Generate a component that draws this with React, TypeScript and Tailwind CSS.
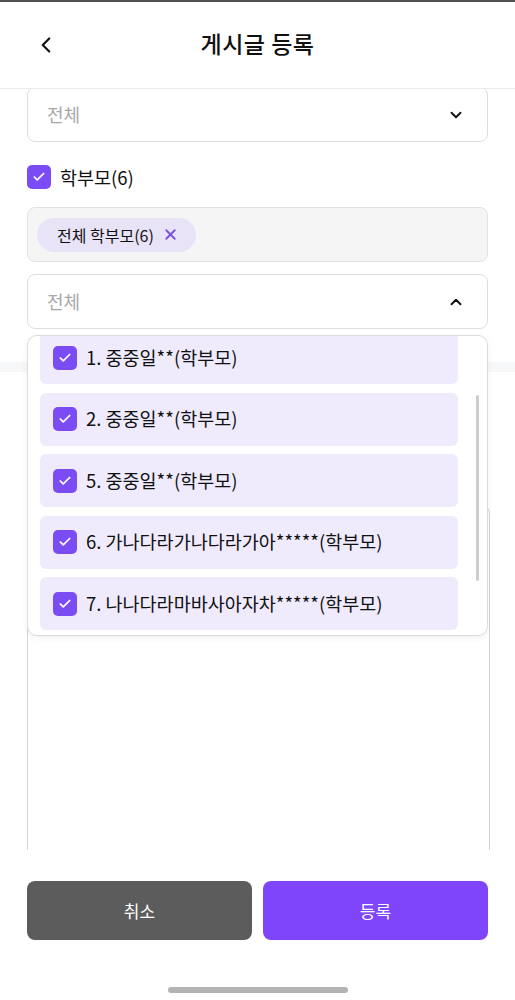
import { Check, ChevronDown, ChevronLeft, ChevronUp, X } from "lucide-react";

const members = [
  "1. 중중일**(학부모)",
  "2. 중중일**(학부모)",
  "5. 중중일**(학부모)",
  "6. 가나다라가나다라가아*****(학부모)",
  "7. 나나다라마바사아자차*****(학부모)",
];

function CheckBox() {
  return (
    <span className="flex h-[24px] w-[24px] shrink-0 items-center justify-center rounded-[5px] bg-[#7b4cf4]">
      <Check className="h-[14px] w-[14px] text-white" strokeWidth={3} />
    </span>
  );
}

export default function App() {
  return (
    <div className="flex h-[1000px] w-[515px] flex-col overflow-hidden bg-white font-['Noto_Sans_CJK_KR','Noto_Sans',sans-serif] text-[#111]">
      {/* status line */}
      <div className="h-[2px] bg-[#505050]" />

      {/* Header */}
      <header className="relative z-10 flex h-[87px] items-center justify-center border-b border-[#ebebeb] bg-white">
        <button className="absolute left-[33px] top-[30px] flex h-[26px] w-[26px] items-center justify-center">
          <ChevronLeft className="h-[26px] w-[26px]" strokeWidth={2} />
        </button>
        <h1 className="-mt-[4px] text-[23px] font-medium tracking-[0.5px]">게시글 등록</h1>
      </header>

      {/* Scroll body */}
      <main className="relative flex-1 overflow-hidden">
        <div className="flex flex-col px-[27px]">
          {/* Select 1 (scrolled under header) */}
          <div className="-mt-[2px] flex h-[55px] items-center justify-between rounded-[8px] border border-[#dedede] pl-[19px] pr-[22px]">
            <span className="text-[18px] text-[#a8a8a8]">전체</span>
            <ChevronDown className="h-[18px] w-[18px]" strokeWidth={2.5} />
          </div>

          {/* Group checkbox */}
          <label className="mt-[23px] flex h-[24px] items-center gap-[9px]">
            <CheckBox />
            <span className="text-[18.5px] leading-none">학부모(6)</span>
          </label>

          {/* Selected chips */}
          <div className="mt-[18px] flex h-[55px] items-center rounded-[8px] border border-[#e2e2e2] bg-[#f5f5f5] px-[9px]">
            <span className="flex h-[34px] items-center gap-[8px] rounded-full bg-[#e9e3f8] pl-[20px] pr-[17px]">
              <span className="text-[16px]">전체 학부모(6)</span>
              <X className="h-[17px] w-[17px] text-[#7a4fe0]" strokeWidth={2.5} />
            </span>
          </div>

          {/* Select 2 + dropdown */}
          <div className="relative mt-[12px]">
            <div className="flex h-[55px] items-center justify-between rounded-[8px] border border-[#dedede] pl-[19px] pr-[22px]">
              <span className="text-[18px] text-[#a8a8a8]">전체</span>
              <ChevronUp className="h-[18px] w-[18px]" strokeWidth={2.5} />
            </div>

            <div className="absolute left-0 right-0 top-[61px] z-20 h-[301px] overflow-hidden rounded-[10px] border border-[#dcdcdc] bg-white shadow-[0_2px_6px_rgba(0,0,0,0.06)]">
              <div className="-mt-[5px] flex flex-col gap-[8.5px] pl-[12px] pr-[29px]">
                {members.map((m) => (
                  <div key={m} className="flex h-[53px] items-center gap-[9px] rounded-[6px] bg-[#efebfd] pl-[13px]">
                    <CheckBox />
                    <span className="text-[18.5px]">{m}</span>
                  </div>
                ))}
              </div>
              <div className="absolute right-[8px] top-[59px] h-[186px] w-[3px] rounded-full bg-[#cdcdcd]" />
            </div>
          </div>
        </div>

        {/* section divider */}
        <div className="mt-[33px] h-[10px] bg-[#f6f7f9]" />

        {/* content area (under dropdown) */}
        <div className="mt-[133px] px-[27px]">
          <div className="h-[400px] w-[463px] rounded-[8px] border border-[#d6d6d6]" />
        </div>
      </main>

      {/* Bottom actions */}
      <footer className="relative z-10 flex h-[150px] flex-col items-center bg-white px-[27px] pt-[31px]">
        <div className="flex w-full gap-[11px]">
          <button className="h-[59px] flex-1 rounded-[8px] bg-[#5c5c5c] text-[17px] text-white">취소</button>
          <button className="h-[59px] flex-1 rounded-[8px] bg-[#7e45fb] text-[17px] text-white">등록</button>
        </div>
        <div className="mt-[47px] h-[6px] w-[180px] rounded-full bg-[#b3b3b3]" />
      </footer>
    </div>
  );
}
